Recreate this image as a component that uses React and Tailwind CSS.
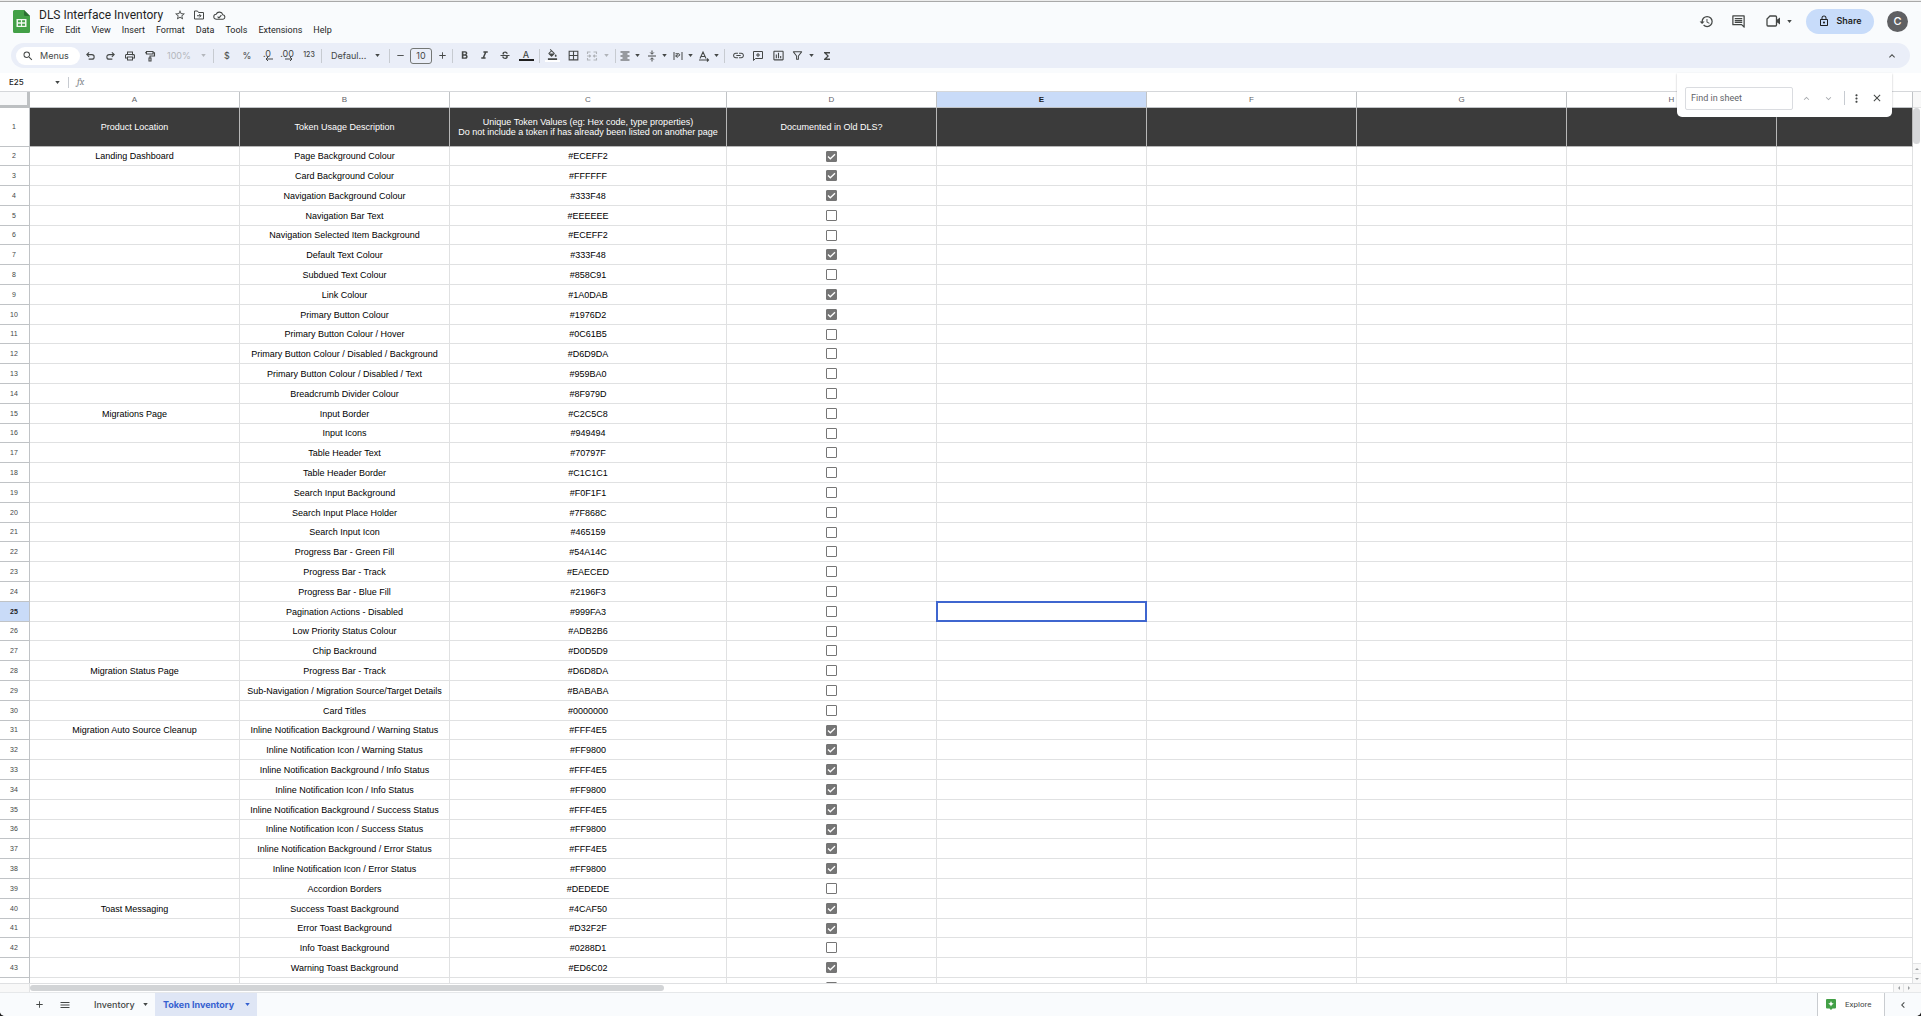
import React from "react";
import {
  MdStarBorder,
  MdHistory,
  MdLockOutline,
  MdBorderAll,
  MdLink,
  MdInsertChartOutlined,
  MdFormatBold,
  MdFormatItalic,
  MdStrikethroughS,
  MdFormatAlignCenter,
  MdFormatColorFill,
  MdFunctions,
  MdMoreVert,
  MdClose,
  MdKeyboardArrowUp,
  MdKeyboardArrowDown,
  MdKeyboardArrowLeft,
  MdAdd,
  MdRemove,
  MdMenu,
  MdSearch,
  MdOutlinePrint,
} from "react-icons/md";

const COLUMNS = ["A", "B", "C", "D", "E", "F", "G", "H", "I"];

const ROWS = [
  ["Landing Dashboard", "Page Background Colour", "#ECEFF2", true],
  ["", "Card Background Colour", "#FFFFFF", true],
  ["", "Navigation Background Colour", "#333F48", true],
  ["", "Navigation Bar Text", "#EEEEEE", false],
  ["", "Navigation Selected Item Background", "#ECEFF2", false],
  ["", "Default Text Colour", "#333F48", true],
  ["", "Subdued Text Colour", "#858C91", false],
  ["", "Link Colour", "#1A0DAB", true],
  ["", "Primary Button Colour", "#1976D2", true],
  ["", "Primary Button Colour / Hover", "#0C61B5", false],
  ["", "Primary Button Colour / Disabled / Background", "#D6D9DA", false],
  ["", "Primary Button Colour / Disabled / Text", "#959BA0", false],
  ["", "Breadcrumb Divider Colour", "#8F979D", false],
  ["Migrations Page", "Input Border", "#C2C5C8", false],
  ["", "Input Icons", "#949494", false],
  ["", "Table Header Text", "#70797F", false],
  ["", "Table Header Border", "#C1C1C1", false],
  ["", "Search Input Background", "#F0F1F1", false],
  ["", "Search Input Place Holder", "#7F868C", false],
  ["", "Search Input Icon", "#465159", false],
  ["", "Progress Bar - Green Fill", "#54A14C", false],
  ["", "Progress Bar - Track", "#EAECED", false],
  ["", "Progress Bar - Blue Fill", "#2196F3", false],
  ["", "Pagination Actions - Disabled", "#999FA3", false],
  ["", "Low Priority Status Colour", "#ADB2B6", false],
  ["", "Chip Backround", "#D0D5D9", false],
  ["Migration Status Page", "Progress Bar - Track", "#D6D8DA", false],
  ["", "Sub-Navigation / Migration Source/Target Details", "#BABABA", false],
  ["", "Card Titles", "#0000000", false],
  ["Migration Auto Source Cleanup", "Inline Notification Background / Warning Status", "#FFF4E5", true],
  ["", "Inline Notification Icon / Warning Status", "#FF9800", true],
  ["", "Inline Notification Background / Info Status", "#FFF4E5", true],
  ["", "Inline Notification Icon / Info Status", "#FF9800", true],
  ["", "Inline Notification Background / Success Status", "#FFF4E5", true],
  ["", "Inline Notification Icon / Success Status", "#FF9800", true],
  ["", "Inline Notification Background / Error Status", "#FFF4E5", true],
  ["", "Inline Notification Icon / Error Status", "#FF9800", true],
  ["", "Accordion Borders", "#DEDEDE", false],
  ["Toast Messaging", "Success Toast Background", "#4CAF50", true],
  ["", "Error Toast Background", "#D32F2F", true],
  ["", "Info Toast Background", "#0288D1", false],
  ["", "Warning Toast Background", "#ED6C02", true],
  ["", "", "", false],
];

function Caret({ className = "text-[#444746]" }) {
  return (
    <svg viewBox="0 0 6 4" className={`h-[3px] w-[5px] shrink-0 ${className}`} fill="currentColor" aria-hidden="true">
      <path d="M0 0h6L3 4z" />
    </svg>
  );
}

function Stroke({ children, className = "size-3", width = 2 }) {
  return (
    <svg viewBox="0 0 24 24" className={className} fill="none" stroke="currentColor" strokeWidth={width} aria-hidden="true">
      {children}
    </svg>
  );
}

function Tool({ label, className = "w-5 justify-center", children }) {
  return (
    <button type="button" aria-label={label} className={`flex h-5 shrink-0 items-center ${className}`}>
      {children}
    </button>
  );
}

function Sep({ className = "" }) {
  return <div className={`w-px shrink-0 bg-[#c7cbd1] ${className}`} />;
}

function SheetsLogo() {
  return (
    <svg viewBox="0 0 17 23" className="h-[23px] w-[17px] shrink-0" aria-label="Sheets" role="img">
      <path d="M1.500 0H11l6 6v15.500a1.500 1.500 0 0 1-1.500 1.500h-14A1.500 1.500 0 0 1 0 21.500v-20A1.500 1.500 0 0 1 1.500 0z" fill="#43a047" />
      <path d="M11 0l6 6h-4.500A1.500 1.500 0 0 1 11 4.500z" fill="#2b6e31" />
      <path d="M3.500 9h10v8h-10z" fill="#f1f8f1" />
      <path d="M5 10.300h2.900v2H5zM9.100 10.300H12v2H9.100zM5 13.700h2.900v2H5zM9.100 13.700H12v2H9.100z" fill="#43a047" />
    </svg>
  );
}

function Header() {
  return (
    <header className="flex h-[41px] shrink-0 items-center px-[13px] pb-[3px] text-[#444746]">
      <SheetsLogo />
      <div className="ml-2 flex flex-col">
        <div className="flex h-[17px] items-center">
          <h1 className="w-[136px] pl-px font-[Roboto,sans-serif] text-[12px] leading-4 whitespace-nowrap text-[#1f1f1f]">DLS Interface Inventory</h1>
          <button type="button" aria-label="Star" className="flex w-[19px] justify-start">
            <MdStarBorder className="size-3" />
          </button>
          <button type="button" aria-label="Move" className="flex w-5 justify-start">
            <Stroke className="size-3">
              <path d="M3 20V4h6l2 3h10v13z" />
              <path d="M8 13.500h8M12.500 10l3.500 3.500-3.500 3.500" />
            </Stroke>
          </button>
          <button type="button" aria-label="See document status" className="flex">
            <Stroke className="size-[13px]">
              <path d="M6.500 19A4.700 4.700 0 0 1 5.800 9.600 6.500 6.500 0 0 1 18 10.500a4.300 4.300 0 0 1 .5 8.500z" />
              <path d="M8.500 14l2.500 2.500 4.500-5" />
            </Stroke>
          </button>
        </div>
        <nav className="flex gap-[11px] pl-[2px] font-[Roboto,sans-serif] text-[9px] leading-3 text-[#1f1f1f]">
          {["File", "Edit", "View", "Insert", "Format", "Data", "Tools", "Extensions", "Help"].map((m) => (
            <button type="button" key={m}>{m}</button>
          ))}
        </nav>
      </div>
      <div className="ml-auto flex items-center">
        <button type="button" aria-label="Version history" className="mr-[17px]">
          <MdHistory className="size-[15px]" />
        </button>
        <button type="button" aria-label="Comments" className="mr-5">
          <Stroke className="size-[15px]">
            <path d="M3 3h18v18l-4-4H3z" strokeLinejoin="round" />
            <path d="M6 7.500h12M6 10.500h12M6 13.500h12" />
          </Stroke>
        </button>
        <button type="button" aria-label="Join a call" className="mr-[14px] flex items-center gap-[6px]">
          <svg viewBox="0 0 15 12" className="h-3 w-[15px]" aria-hidden="true">
            <path d="M4 1h5.500a1 1 0 0 1 1 1v8a1 1 0 0 1-1 1H2a1 1 0 0 1-1-1V4z" fill="none" stroke="currentColor" strokeWidth="1.300" />
            <path d="M10.500 5l3.500-2.600v7.200L10.500 7z" fill="currentColor" />
          </svg>
          <Caret />
        </button>
        <button type="button" className="mr-[13px] flex h-[25px] w-[68px] items-center justify-center gap-[6px] rounded-full bg-[#c8dcfa] text-[9px] font-semibold text-[#1f1f1f]">
          <MdLockOutline className="size-3" />
          Share
        </button>
        <button type="button" aria-label="Account" className="flex size-[21px] items-center justify-center rounded-full bg-[#5f6063] text-[11px] font-medium text-white">
          C
        </button>
      </div>
    </header>
  );
}

function Toolbar() {
  return (
    <div className="mx-[11px] flex h-[25px] shrink-0 items-center rounded-full bg-[#eaeef8] pl-[5px] text-[9px] text-[#444746]">
      <button type="button" className="flex h-[18px] w-16 shrink-0 items-center gap-[6px] rounded-full bg-white pl-[6px]">
        <MdSearch className="size-3" />
        Menus
      </button>
      <Tool label="Undo">
        <Stroke width={2.4} className="size-[11px]"><path d="M9 15 4 10l5-5M4 10h11a5 5 0 0 1 0 10H8" /></Stroke>
      </Tool>
      <Tool label="Redo">
        <Stroke width={2.4} className="size-[11px]"><path d="M15 15l5-5-5-5M20 10H9a5 5 0 0 0 0 10h7" /></Stroke>
      </Tool>
      <Tool label="Print"><MdOutlinePrint className="size-3" /></Tool>
      <Tool label="Paint format">
        <Stroke width={2.2}>
          <path d="M5 3h13v5H5zM18 5.500h3V12h-9v4M10 16h4v6h-4zM5 5.500H2" />
        </Stroke>
      </Tool>
      <Tool label="Zoom" className="w-12 justify-between pl-[7px] pr-[2px] text-[#b4b7bc]">
        100%
        <Caret className="text-[#b4b7bc]" />
      </Tool>
      <Sep className="mr-[3px] ml-[5px] h-[14px]" />
      <Tool label="Format as currency">$</Tool>
      <Tool label="Format as percent">%</Tool>
      <Tool label="Decrease decimal places">
        <span className="flex flex-col items-center text-[9px] leading-[8px]">
          .0
          <svg viewBox="0 0 8 4" className="-mt-px ml-1 h-1 w-2" fill="none" stroke="currentColor" aria-hidden="true"><path d="M8 2H1M3 0L1 2l2 2" /></svg>
        </span>
      </Tool>
      <Tool label="Increase decimal places">
        <span className="flex flex-col items-center text-[9px] leading-[8px]">
          .00
          <svg viewBox="0 0 8 4" className="-mt-px ml-1 h-1 w-2" fill="none" stroke="currentColor" aria-hidden="true"><path d="M0 2h7M5 0l2 2-2 2" /></svg>
        </span>
      </Tool>
      <Tool label="More formats" className="w-6 justify-center text-[7px] font-medium">123</Tool>
      <Sep className="mr-[9px] h-[14px]" />
      <Tool label="Font" className="w-[49px] justify-between">
        Defaul...
        <Caret />
      </Tool>
      <Sep className="ml-[9px] h-[14px]" />
      <Tool label="Decrease font size"><MdRemove className="size-[11px]" /></Tool>
      <input aria-label="Font size" defaultValue="10" className="h-4 w-[22px] shrink-0 rounded-[3px] border border-[#747775] bg-transparent text-center text-[9px] text-[#444746]" />
      <Tool label="Increase font size"><MdAdd className="size-[11px]" /></Tool>
      <Sep className="mr-px h-[14px]" />
      <Tool label="Bold"><MdFormatBold className="size-[13px]" /></Tool>
      <Tool label="Italic"><MdFormatItalic className="size-[13px]" /></Tool>
      <Tool label="Strikethrough" className="w-[22px] justify-center"><MdStrikethroughS className="size-3" /></Tool>
      <Tool label="Text colour">
        <span className="flex flex-col items-center text-[9px] leading-[9px] font-medium">
          A
          <span className="h-[2px] w-[15px] bg-[#1f1f1f]" />
        </span>
      </Tool>
      <Sep className="mr-[2px] ml-[3px] h-[14px]" />
      <Tool label="Fill colour">
        <span className="flex flex-col items-center">
          <MdFormatColorFill className="size-[11px]" />
          <span className="h-[2px] w-[15px] bg-white" />
        </span>
      </Tool>
      <Tool label="Borders" className="w-[22px] justify-center"><MdBorderAll className="size-[13px]" /></Tool>
      <Tool label="Merge cells" className="w-[27px] justify-center gap-[6px] text-[#b0b3b8]">
        <Stroke className="size-3" width={2.2}>
          <path d="M9 4H3v4M15 4h6v4M9 20H3v-4M15 20h6v-4M2 12h7M22 12h-7M6.500 9.500L9 12l-2.500 2.500M17.500 9.500L15 12l2.500 2.500" />
        </Stroke>
        <Caret className="text-[#b0b3b8]" />
      </Tool>
      <Sep className="ml-1 h-[14px]" />
      <Tool label="Horizontal align" className="w-[27px] justify-center gap-1"><MdFormatAlignCenter className="size-3" /><Caret /></Tool>
      <Tool label="Vertical align" className="w-[26px] justify-center gap-1">
        <Stroke>
          <path d="M4 12h16M12 1v6M12 23v-6M8.500 5l3.500 3.500L15.500 5M8.500 19l3.500-3.500 3.500 3.500" />
        </Stroke>
        <Caret />
      </Tool>
      <Tool label="Text wrapping" className="w-[26px] justify-center gap-1">
        <Stroke>
          <path d="M4 4v16M20 4v16M7 12h7a2.500 2.500 0 0 0 0-4.500H7M11 8.500L7.500 12l3.500 3.500" />
        </Stroke>
        <Caret />
      </Tool>
      <Tool label="Text rotation" className="w-[26px] justify-center gap-1">
        <Stroke width={2.2}>
          <path d="M4 17L10 4l6 13M6 13h8M2 20h18M18 17l3 3-3 3" />
        </Stroke>
        <Caret />
      </Tool>
      <Sep className="mr-[3px] ml-[3px] h-[14px]" />
      <Tool label="Insert link"><MdLink className="size-[13px]" /></Tool>
      <Tool label="Insert comment">
        <Stroke className="size-3">
          <path d="M3 3h18v14H7l-4 4z" strokeLinejoin="round" />
          <path d="M12 6v8M8 10h8" />
        </Stroke>
      </Tool>
      <Tool label="Insert chart"><MdInsertChartOutlined className="size-[13px]" /></Tool>
      <Tool label="Create a filter" className="w-[29px] justify-center gap-[6px]">
        <Stroke width={2.2} className="size-[11px]"><path d="M3 4h18l-7 9v7h-4v-7z" strokeLinejoin="round" /></Stroke>
        <Caret />
      </Tool>
      <Tool label="Functions"><MdFunctions className="size-3" /></Tool>
      <button type="button" aria-label="Hide the menus" className="mr-3 ml-auto">
        <MdKeyboardArrowUp className="size-3" />
      </button>
    </div>
  );
}

function FormulaBar() {
  return (
    <div className="mt-[5px] flex h-[19px] shrink-0 items-center border-b border-[#d5d7da] bg-white text-[8px] text-[#1f1f1f]">
      <button type="button" className="flex w-[60px] items-center justify-between pl-[9px] font-medium">
        E25
        <Caret />
      </button>
      <Sep className="mr-2 ml-2 h-[11px]" />
      <label htmlFor="formula" className="font-serif text-[10px] text-[#80868b] italic">fx</label>
      <input id="formula" className="ml-3 h-4 min-w-0 flex-1 bg-transparent outline-none" />
    </div>
  );
}

function FindBox() {
  return (
    <div className="absolute top-[73px] right-[29px] z-20 flex h-11 w-[215px] items-center rounded-b-[5px] bg-white pt-[6px] pl-2 text-[#444746] shadow-[0_1px_2px_rgba(60,64,67,0.4)]">
      <input
        aria-label="Find in sheet"
        placeholder="Find in sheet"
        className="h-[23px] w-[108px] rounded-[2px] border border-[#dadce0] px-[5px] font-[Roboto,sans-serif] text-[9px] placeholder:text-[#5f6368]"
      />
      <button type="button" aria-label="Previous" className="ml-2 text-[#a5a8ac]"><MdKeyboardArrowUp className="size-[11px]" /></button>
      <button type="button" aria-label="Next" className="ml-[11px] text-[#a5a8ac]"><MdKeyboardArrowDown className="size-[11px]" /></button>
      <Sep className="mr-[5px] ml-[10px] h-[14px]" />
      <button type="button" aria-label="More options"><MdMoreVert className="size-[13px]" /></button>
      <button type="button" aria-label="Close" className="ml-2"><MdClose className="size-3" /></button>
    </div>
  );
}

function CheckCell({ row, checked }) {
  return (
    <span className="relative mx-auto block size-[11px]">
      <input
        type="checkbox"
        aria-label={`Row ${row} documented in old DLS`}
        defaultChecked={checked}
        className="peer block size-[11px] appearance-none rounded-[1px] border border-[#757575] bg-white checked:bg-[#757575]"
      />
      <svg viewBox="0 0 11 11" className="pointer-events-none absolute inset-0 hidden peer-checked:block" fill="none" stroke="#fff" strokeWidth="1.300" aria-hidden="true">
        <path d="M2 5.500l2.300 2.300L9 3.200" />
      </svg>
    </span>
  );
}

const CELL = "border-r border-b border-[#e0e1e2] p-0 text-center align-middle overflow-hidden whitespace-nowrap";
const DARK = "border-r border-b border-[#b7b7b7] bg-[#3b3b3b] p-0 text-center align-middle font-normal text-white";

function Grid() {
  return (
    <div className="min-w-0 flex-1 overflow-hidden bg-white">
      <table className="w-full table-fixed border-separate border-spacing-0 font-['Liberation_Sans',Arial,sans-serif] text-[9px] leading-[10px] text-black">
        <colgroup>
          <col className="w-[30px]" />
          <col className="w-[210px]" />
          <col className="w-[210px]" />
          <col className="w-[277px]" />
          <col className="w-[210px]" />
          <col className="w-[210px]" />
          <col className="w-[210px]" />
          <col className="w-[210px]" />
          <col className="w-[210px]" />
          <col />
        </colgroup>
        <thead>
          <tr className="h-4 text-[8px] text-[#5f6368]">
            <td className="border-r-3 border-b-3 border-[#bdc0c2] bg-[#f8f9fa] p-0" />
            {COLUMNS.map((c) => (
              <th
                key={c}
                scope="col"
                className={
                  c === "E"
                    ? "border-r border-b border-[#c0c3c6] bg-[#c9dbf8] p-0 font-bold text-[#202124]"
                    : "border-r border-b border-[#c0c3c6] bg-white p-0 font-normal"
                }
              >
                {c === "I" ? "" : c}
              </th>
            ))}
          </tr>
        </thead>
        <tbody>
          <tr className="h-[39px]">
            <th scope="row" className="border-r border-b border-[#c0c3c6] bg-white p-0 pr-px text-[7px] font-normal text-[#444746]">1</th>
            <th className={DARK}>Product Location</th>
            <th className={DARK}>Token Usage Description</th>
            <th className={DARK}>
              Unique Token Values (eg: Hex code, type properties)
              <br />
              Do not include a token if has already been listed on another page
            </th>
            <th className={DARK}>Documented in Old DLS?</th>
            <td className={DARK} />
            <td className={DARK} />
            <td className={DARK} />
            <td className={DARK} />
            <td className={DARK} />
          </tr>
          {ROWS.map(([location, usage, value, checked], i) => {
            const n = i + 2;
            return (
              <tr key={n} className={n % 5 === 1 || n === 2 ? "h-[19px]" : "h-5"}>
                <th
                  scope="row"
                  className={
                    n === 25
                      ? "border-r border-b border-[#c0c3c6] bg-[#c9dbf8] p-0 pr-px text-[7px] font-bold text-[#202124]"
                      : "border-r border-b border-[#c0c3c6] bg-white p-0 pr-px text-[7px] font-normal text-[#444746]"
                  }
                >
                  {n === 44 ? "" : n}
                </th>
                <td className={CELL}>{location}</td>
                <td className={CELL}>{usage}</td>
                <td className={CELL}>{value}</td>
                <td className={CELL}><CheckCell row={n} checked={checked} /></td>
                {n === 25 ? (
                  <td className="relative border-r border-b border-[#e0e1e2] p-0">
                    <div className="absolute -inset-x-px -inset-y-px border-2 border-[#3f66cf]" />
                  </td>
                ) : (
                  <td className={CELL} />
                )}
                <td className={CELL} />
                <td className={CELL} />
                <td className={CELL} />
                <td className={CELL} />
              </tr>
            );
          })}
        </tbody>
      </table>
    </div>
  );
}

function Arrow({ d, label, className }) {
  return (
    <button type="button" aria-label={label} className={`flex shrink-0 items-center justify-center border-[#e3e4e5] bg-[#f8f8f8] ${className}`}>
      <svg viewBox="0 0 4 4" className="size-1" fill="#9a9da0" aria-hidden="true"><path d={d} /></svg>
    </button>
  );
}

function Footer() {
  return (
    <footer className="flex h-6 shrink-0 items-stretch border-t border-[#e6e8ea] bg-[#f9fbfd] text-[9px] text-[#444746]">
      <button type="button" aria-label="Add sheet" className="ml-[33px] flex w-[13px] items-center justify-center"><MdAdd className="size-[11px]" /></button>
      <button type="button" aria-label="All sheets" className="ml-[13px] flex w-3 items-center justify-center"><MdMenu className="size-3" /></button>
      <button type="button" className="ml-[15px] flex w-[69px] items-center justify-between pr-[7px] pl-2 font-medium">
        Inventory
        <Caret />
      </button>
      <button type="button" className="flex w-[102px] items-center justify-between bg-[#dfe6f5] pr-[7px] pl-2 font-bold text-[#3560d0]">
        Token Inventory
        <Caret className="text-[#3560d0]" />
      </button>
      <button type="button" className="ml-auto flex w-[67px] items-center gap-[9px] border-l border-[#c9ccd0] bg-white pl-2 font-[Roboto,sans-serif] text-[8px]">
        <svg viewBox="0 0 10 11" className="h-[11px] w-[10px]" aria-hidden="true">
          <path d="M1 0h8a1 1 0 0 1 1 1v7.500a1 1 0 0 1-1 1H6.500L5 11 3.500 9.500H1a1 1 0 0 1-1-1V1a1 1 0 0 1 1-1z" fill="#43a047" />
          <path d="M5 2l.9 1.900 1.900.9-1.900.9L5 7.600l-.9-1.900-1.900-.9 1.900-.9z" fill="#fff" />
        </svg>
        Explore
      </button>
      <button type="button" aria-label="Show side panel" className="flex w-[37px] items-center justify-center border-l border-[#c9ccd0]"><MdKeyboardArrowLeft className="size-3" /></button>
    </footer>
  );
}

export default function App() {
  return (
    <div className="bg-[#202020]">
      <div className="relative flex h-screen flex-col overflow-hidden rounded-b-[5px] bg-[#f9fbfd] font-[Inter,'Open_Sans',sans-serif]">
        <div className="h-[2px] shrink-0 border-b border-[#a9a9a9] bg-[#ececec]" />
        <Header />
        <Toolbar />
        <FormulaBar />
        <FindBox />
        <main className="flex min-h-0 flex-1">
          <Grid />
          <div className="flex w-2 shrink-0 flex-col bg-white">
            <div className="h-4 border-b border-[#e3e4e5] bg-[#f8f8f8]" />
            <div className="mr-px h-9 rounded-full bg-[#d5d6d8]" />
            <Arrow label="Scroll up" d="M0 3l2-2 2 2z" className="mt-auto h-[10px] w-full border-t" />
            <Arrow label="Scroll down" d="M0 1h4L2 3z" className="h-[10px] w-full border-t" />
          </div>
        </main>
        <div className="flex h-[9px] shrink-0 items-center border-t border-[#dfe0e2] bg-white">
          <div className="h-full w-[30px] border-r border-[#e3e4e5] bg-[#f8f8f8]" />
          <div className="h-[6px] w-[33%] rounded-full bg-[#d2d4d6]" />
          <Arrow label="Scroll left" d="M3 0v4L1 2z" className="ml-auto h-full w-[10px] border-l" />
          <Arrow label="Scroll right" d="M1 0l2 2-2 2z" className="h-full w-[10px] border-l" />
          <div className="h-full w-2 bg-[#f8f8f8]" />
        </div>
        <Footer />
      </div>
    </div>
  );
}
